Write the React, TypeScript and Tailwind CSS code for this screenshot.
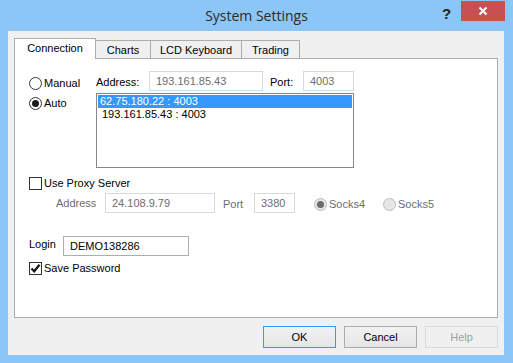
import React from 'react';

function Radio({ checked = false, disabled = false, label }: { checked?: boolean; disabled?: boolean; label: string }) {
    return (
        <div className="flex items-center h-[13px]">
            <div
                className={`w-[13px] h-[13px] rounded-full border flex items-center justify-center ${
                    disabled ? 'border-[#bcbcbc] bg-[#e6e6e6]' : 'border-[#333] bg-white'
                }`}
            >
                {checked && (
                    <div className={`w-[7px] h-[7px] rounded-full ${disabled ? 'bg-[#6b6b6b]' : 'bg-[#1c1c1c]'}`} />
                )}
            </div>
            <span className={`ml-[2px] leading-[13px] ${disabled ? 'text-[#6d6d6d]' : 'text-black'}`}>{label}</span>
        </div>
    );
}

function Checkbox({ checked = false, label }: { checked?: boolean; label: string }) {
    return (
        <div className="flex items-center h-[13px]">
            <div className="w-[13px] h-[13px] border border-[#333] bg-white flex items-center justify-center">
                {checked && (
                    <svg width="11" height="11" viewBox="0 0 11 11">
                        <path d="M1.5 5.5 L4.2 8.3 L9.5 1.8" fill="none" stroke="#111" strokeWidth="2.2" />
                    </svg>
                )}
            </div>
            <span className="ml-[2px] leading-[13px] text-black">{label}</span>
        </div>
    );
}

function Field({ value, width, dim = true, dark = false }: { value: string; width: string; dim?: boolean; dark?: boolean }) {
    return (
        <div
            className={`${width} h-[20px] bg-white border flex items-center pl-[6px] ${
                dark ? 'border-[#abadb3]' : 'border-[#d9d9d9]'
            } ${dim ? 'text-[#6d6d6d]' : 'text-black'}`}
        >
            {value}
        </div>
    );
}

export default function App() {
    const tabs = [
        { name: 'Connection', w: 'w-[82px]', active: true },
        { name: 'Charts', w: 'w-[56px]' },
        { name: 'LCD Keyboard', w: 'w-[92px]' },
        { name: 'Trading', w: 'w-[59px]' },
    ];

    return (
        <div className="w-[513px] h-[363px] bg-[#8cc6f6] flex flex-col font-['Liberation_Sans',Arial,sans-serif] text-[11px] text-black">
            {/* title bar */}
            <div className="h-[31px] relative flex items-center justify-center">
                <span className="font-['Open_Sans',sans-serif] text-[14px] text-[#2b2b2b] -mt-[1px]">System Settings</span>
                <span className="absolute left-[442px] top-[3px] text-[15px] font-bold text-[#222] font-['Liberation_Sans',sans-serif]">?</span>
                <div className="absolute left-[461px] top-[1px] w-[44px] h-[20px] bg-[#c75050] flex items-center justify-center">
                    <svg width="10" height="10" viewBox="0 0 10 10">
                        <path d="M1.5 1.5 L8.5 8.5 M8.5 1.5 L1.5 8.5" stroke="#fff" strokeWidth="2" />
                    </svg>
                </div>
            </div>

            {/* client */}
            <div className="ml-[8px] mr-[9px] mb-[8px] flex-1 bg-[#f0f0f0] flex flex-col px-[6px] pt-[7px]">
                <div className="flex items-end h-[21px] -mb-px">
                    {tabs.map((t, i) => (
                        <div
                            key={t.name}
                            className={`${t.w} ${i > 0 ? '-ml-px' : ''} border-l border-t border-r border-[#acacac] flex items-center justify-center ${
                                t.active ? 'h-[21px] bg-white relative z-10 pb-[2px]' : 'h-[19px] bg-[#f0f0f0]'
                            }`}
                        >
                            {t.name}
                        </div>
                    ))}
                </div>

                <div className="h-[260px] w-[484px] bg-white border border-[#acacac] pt-[12px] pl-[14px]">
                    {/* server */}
                    <div className="flex">
                        <div className="w-[67px] pt-[6px] flex flex-col gap-[7px]">
                            <Radio label="Manual" />
                            <Radio label="Auto" checked />
                        </div>
                        <div className="flex flex-col">
                            <div className="flex items-center h-[20px]">
                                <span className="w-[53px] pt-[3px]">Address:</span>
                                <Field value="193.161.85.43" width="w-[114px]" />
                                <span className="ml-[7px] w-[33px] pt-[3px]">Port:</span>
                                <Field value="4003" width="w-[51px]" />
                            </div>
                            <div className="mt-[2px] w-[258px] h-[75px] border border-[#828790] p-[1px] leading-[13px]">
                                <div className="h-[13px] bg-[#3399ff] text-white pl-[2px]">62.75.180.22 : 4003</div>
                                <div className="h-[13px] pl-[4px]">193.161.85.43 : 4003</div>
                            </div>
                        </div>
                    </div>

                    {/* proxy */}
                    <div className="mt-[9px]">
                        <Checkbox label="Use Proxy Server" />
                    </div>
                    <div className="mt-[3px] pl-[27px] flex items-center h-[20px]">
                        <span className="w-[49px] text-[#6d6d6d]">Address</span>
                        <Field value="24.108.9.79" width="w-[110px]" />
                        <span className="ml-[8px] w-[31px] text-[#6d6d6d] pt-[3px]">Port</span>
                        <Field value="3380" width="w-[41px]" />
                        <div className="ml-[19px] w-[69px] pt-[3px]">
                            <Radio label="Socks4" checked disabled />
                        </div>
                        <div className="pt-[3px]">
                            <Radio label="Socks5" disabled />
                        </div>
                    </div>

                    {/* login */}
                    <div className="mt-[23px] flex items-center h-[20px]">
                        <span className="w-[34px] -mt-[3px]">Login</span>
                        <Field value="DEMO138286" width="w-[126px]" dim={false} dark />
                    </div>
                    <div className="mt-[6px]">
                        <Checkbox label="Save Password" checked />
                    </div>
                </div>

                <div className="mt-[8px] flex justify-end gap-[8px]">
                    <button className="w-[73px] h-[22px] border border-[#3399ff] bg-gradient-to-b from-[#f2f2f2] to-[#e5e5e5] text-black">OK</button>
                    <button className="w-[73px] h-[22px] border border-[#acacac] bg-gradient-to-b from-[#f2f2f2] to-[#e5e5e5] text-black">Cancel</button>
                    <button className="w-[73px] h-[22px] border border-[#d9d9d9] bg-[#f0f0f0] text-[#a0a0a0]">Help</button>
                </div>
            </div>
        </div>
    );
}
